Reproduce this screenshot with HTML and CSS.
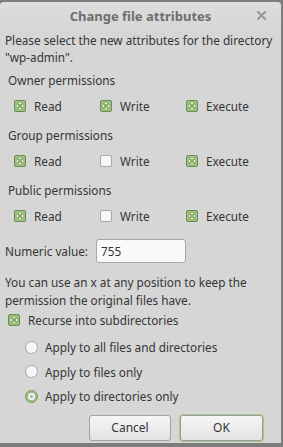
FILE: index.html
```html
<!DOCTYPE html>
<html lang="en">
<head>
  <meta charset="UTF-8" />
  <title>Change file attributes</title>
  <link rel="stylesheet" href="styles.css">
</head>
<body>
<div class="dialog">
  <div class="titlebar">
    <span class="title">Change file attributes</span>
    <svg class="close" width="9" height="9" viewBox="0 0 9 9">
      <path d="M1 1 L8 8 M8 1 L1 8" stroke="#959595" stroke-width="2" stroke-linecap="round" />
    </svg>
  </div>
  <div class="content">
    <p class="intro">Please select the new attributes for the directory "wp-admin".</p>

    <div class="group">
      <div class="group-label">Owner permissions</div>
      <div class="perm-row">
        <label class="check"><span class="box on"></span>Read</label>
        <label class="check"><span class="box on"></span>Write</label>
        <label class="check"><span class="box on"></span>Execute</label>
      </div>
    </div>

    <div class="group">
      <div class="group-label">Group permissions</div>
      <div class="perm-row">
        <label class="check"><span class="box on"></span>Read</label>
        <label class="check"><span class="box"></span>Write</label>
        <label class="check"><span class="box on"></span>Execute</label>
      </div>
    </div>

    <div class="group">
      <div class="group-label">Public permissions</div>
      <div class="perm-row">
        <label class="check"><span class="box on"></span>Read</label>
        <label class="check"><span class="box"></span>Write</label>
        <label class="check"><span class="box on"></span>Execute</label>
      </div>
    </div>

    <div class="numeric">
      <span>Numeric value:</span>
      <div class="field">755</div>
    </div>

    <p class="hint">You can use an x at any position to keep the permission the original files have.</p>

    <label class="check recurse"><span class="box on"></span>Recurse into subdirectories</label>

    <div class="radios">
      <label class="radio"><span class="dot"></span>Apply to all files and directories</label>
      <label class="radio"><span class="dot"></span>Apply to files only</label>
      <label class="radio"><span class="dot on"></span>Apply to directories only</label>
    </div>

    <div class="buttons">
      <button class="btn">Cancel</button>
      <button class="btn default">OK</button>
    </div>
  </div>
</div>
</body>
</html>
```

FILE: styles.css
```css
* {
  box-sizing: border-box;
}
html, body {
  margin: 0;
  padding: 0;
  background: #7d7d7d;
  font-family: "Noto Sans", "Open Sans", sans-serif;
  font-size: 11.75px;
  color: #353535;
}
.dialog {
  width: 281px;
  height: 441px;
  margin-top: 2px;
  background: #d6d6d6;
  border-radius: 4px 4px 0 0;
  overflow: hidden;
}
.titlebar {
  height: 28px;
  display: flex;
  align-items: center;
  justify-content: center;
  position: relative;
  background: linear-gradient(#dedede, #d6d6d6);
}
.title {
  font-weight: bold;
  font-size: 13px;
  color: #6e6e6e;
}
.close {
  position: absolute;
  right: 15px;
  top: 9px;
}
.content {
  padding: 2px 5px 0 5px;
}
p {
  margin: 0;
}
.intro {
  line-height: 17px;
}
.group {
  margin-top: 4px;
}
.group-label {
  padding-left: 3px;
  line-height: 20px;
}
.perm-row {
  display: grid;
  grid-template-columns: 86px 86px 1fr;
  padding-left: 9px;
  height: 31px;
  align-items: center;
}
.check, .radio {
  display: flex;
  align-items: center;
}
.box {
  width: 12px;
  height: 12px;
  margin-right: 8px;
  border: 1px solid #a9a9a9;
  border-radius: 2px;
  background: #f7f7f7;
  position: relative;
}
.box.on {
  background: #9dbf7f;
  border-color: #6b8c52;
}
.box.on::after {
  content: "";
  position: absolute;
  left: 2px;
  top: 2px;
  width: 6px;
  height: 6px;
  background:
    linear-gradient(45deg, transparent 38%, #8fb070 38%, #8fb070 62%, transparent 62%),
    linear-gradient(-45deg, transparent 38%, #8fb070 38%, #8fb070 62%, transparent 62%),
    #f6f9f2;
}
.numeric {
  display: flex;
  align-items: center;
  margin-top: 8px;
  height: 24px;
}
.numeric span {
  width: 91px;
}
.field {
  width: 90px;
  height: 24px;
  background: #f9f9f9;
  border: 1px solid #a6a6a6;
  border-radius: 3px;
  padding: 0 4px;
  line-height: 22px;
}
.hint {
  margin-top: 10px;
  line-height: 18px;
}
.recurse {
  margin-top: 1px;
  padding-left: 3px;
  height: 20px;
}
.radios {
  padding-left: 20px;
  margin-top: 5px;
}
.radio {
  height: 24.5px;
}
.dot {
  width: 13px;
  height: 13px;
  margin-right: 7px;
  border-radius: 50%;
  border: 1px solid #a6a6a6;
  background: #f7f7f7;
  position: relative;
}
.dot.on {
  border-color: #7a9c5c;
  background: #9dbf7f;
}
.dot.on::after {
  content: "";
  position: absolute;
  left: 2px;
  top: 2px;
  width: 7px;
  height: 7px;
  border-radius: 50%;
  background: #f2f2f2;
  box-shadow: inset 0 0 0 2px #f2f2f2, inset 0 0 0 5px #a8a8a8;
}
.buttons {
  display: flex;
  justify-content: flex-end;
  gap: 9px;
  padding-right: 13px;
  margin-top: 6px;
}
.btn {
  width: 82px;
  height: 26px;
  font-family: inherit;
  font-size: 12px;
  color: #353535;
  background: linear-gradient(#f6f6f6, #e2e2e2);
  border: 1px solid #a3a3a3;
  border-radius: 3px;
}
.btn.default {
  width: 83px;
  border-color: #9a9a9a;
  box-shadow: 0 0 0 1px #a8c98a;
}
```
